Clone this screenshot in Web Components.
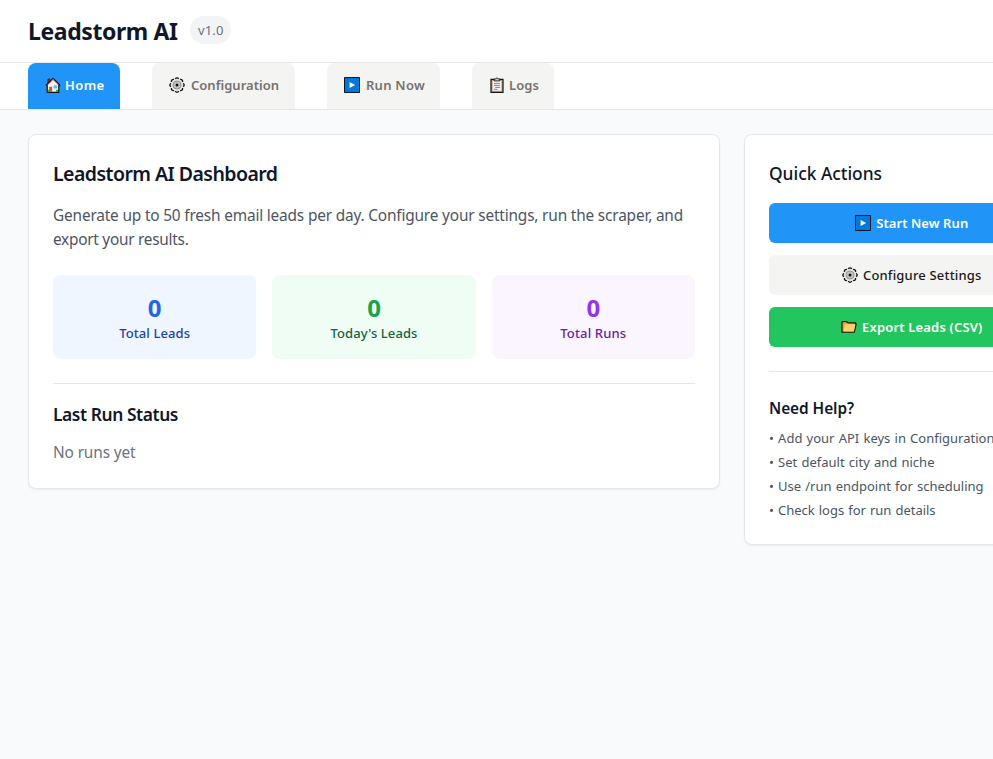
<!DOCTYPE html>
<html lang="en">
<head>
<meta charset="utf-8">
<title>Leadstorm AI</title>
<style>
html,body{margin:0;height:100%;overflow:hidden;background:#f9fafb}
body{font-family:"Noto Sans","Open Sans",sans-serif;color:#0f172a}
</style>
</head>
<body>
<lead-app></lead-app>
<script>
const define = (name, html, setup) => {
  const t = document.createElement('template');
  t.innerHTML = html;
  customElements.define(name, class extends HTMLElement {
    constructor() {
      super();
      this.attachShadow({mode: 'open'}).append(t.content.cloneNode(true));
    }
    connectedCallback() { if (setup) setup(this); }
  });
};

/* One line of text, tracked so that it fills the width given in "w". */
define('fit-text', `<style>
:host{display:inline-block;white-space:pre;flex:none}
</style><span><slot></slot></span>`, el => {
  const size = el.getAttribute('size') || 14;
  el.style.fontSize = size + 'px';
  el.style.fontWeight = el.getAttribute('weight') || 400;
  const w = +el.getAttribute('w');
  if (!w) return;
  const span = el.shadowRoot.querySelector('span');
  const natural = span.getBoundingClientRect().width;
  el.style.letterSpacing = ((w - natural) / el.textContent.length).toFixed(4) + 'px';
  el.style.width = w + 'px';
});

const gearTeeth = Array.from({length: 8}, (_, i) =>
  `<path d="M6.2 1.9Q8 -.3 9.8 1.9" transform="rotate(${i * 45} 8 8)"/>`).join('');
const icons = {
  home: `<path d="M2.2 7.8V15.2H13.8V7.8L8 2Z" fill="#f4f4f4"/><path d="M2.5 12.8h3v2h-3zM11 12.8h2.6v2H11z" fill="#16c60c"/><path d="M3 2h2v3L3 7z" fill="#d13438" stroke="#111" stroke-width=".7"/><path d="M.8 8.5 8 1.4l7.2 7.1" fill="none" stroke="#111" stroke-width="1.3"/><path d="M2.2 8v7.3h11.6V8" fill="none" stroke="#111" stroke-width="1.2"/><path d="M2.9 7.5 8 2.7l5.1 4.8" fill="none" stroke="#e8583c" stroke-width=".9"/><path d="M4.2 9.8h2.9v5H4.2z" fill="#e74835"/><path d="M8.6 8.2h3.4v3.2H8.6z" fill="#55c8f2"/>`,
  gear: `<circle cx="8" cy="8" r="6.5" fill="#e6e6e6"/><g fill="#eee" stroke="#161616" stroke-width="1.35">${gearTeeth}</g><circle cx="8" cy="8" r="5.8" fill="#e2e2e2"/><circle cx="8" cy="8" r="4" fill="#d2d2d2" stroke="#8a8a8a" stroke-width=".9"/><circle cx="8" cy="8" r="2.6" fill="none" stroke="#aaa" stroke-width=".6"/><circle cx="8" cy="8" r="1.5" fill="#111"/>`,
  play: `<path d="M.5.5h15v15H.5z" fill="#0078d7" stroke="#0b1724"/><path d="M5.6 4.9v6.2L11.1 8z" fill="#fff"/>`,
  clip: `<path d="M2 2.3h12v13H2z" fill="#c9a98d" stroke="#151515" stroke-width="1.2"/><path d="M3.7 4h8.6v9.8H3.7z" fill="#f5f5f5"/><path d="M5.2 3.9V1.9h1.6Q8-.4 9.2 1.9h1.6v2z" fill="#ccc" stroke="#222" stroke-width=".9"/><path d="M5 6.4h5.8M5 8.4h5.8M6.2 10.4H11M5 12.3h3.5" stroke="#777" stroke-width=".9"/>`,
  folder: `<path d="M1 13.2V2.7h4.8l1.1 1.1h7.4v1.1h.9l-1.9 8.3z" fill="#e9a92b" stroke="#1b1a12" stroke-width="1.2" stroke-linejoin="round"/><path d="M4.2 5.3h10.2l-1.6 7.3H2.4z" fill="#ffd071"/>`
};
define('app-icon', `<style>:host{display:block;flex:none;width:16px;height:16px}svg{display:block}</style><svg width="16" height="16" viewBox="0 0 16 16"></svg>`, el => {
  el.shadowRoot.querySelector('svg').innerHTML = icons[el.getAttribute('name')];
});

define('app-header', `<style>
:host{display:flex;box-sizing:border-box;height:63px;padding:0 28px;gap:12px;align-items:center;background:#fff;border-bottom:1px solid #e5e7eb}
.title{line-height:32px;padding-top:2px}
.pill{box-sizing:border-box;display:flex;width:41px;height:28px;padding:0 8px;border-radius:14px;background:#f3f4f6;color:#6b7280;line-height:28px;margin-top:-2px}
</style><div class="title"><fit-text size="23" weight="700" w="149.5">Leadstorm AI</fit-text></div><div class="pill" style="margin-left:.5px"><fit-text size="13" w="25.5">v1.0</fit-text></div>`);

define('nav-tab', `<style>
:host{display:flex;box-sizing:border-box;height:46px;padding:0 16px 2px;align-items:center;border-radius:8px 8px 0 0;background:#f4f4f3;color:#78716c;line-height:20px}
:host([active]){background:#2094f7;color:#fff}
</style><slot></slot>`);

define('app-nav', `<style>
:host{display:flex;box-sizing:border-box;height:47px;padding:0 28px;gap:32px;background:#fff;border-bottom:1px solid #e5e7eb}
nav-tab{flex:none}
app-icon{margin:0 6px 0 1px}
</style>
<nav-tab active style="width:92px"><app-icon name="home" style="margin-right:4px"></app-icon><fit-text size="13" weight="600" w="39.5">Home</fit-text></nav-tab>
<nav-tab style="width:143px"><app-icon name="gear"></app-icon><fit-text size="13" weight="600" w="88">Configuration</fit-text></nav-tab>
<nav-tab style="width:113px"><app-icon name="play"></app-icon><fit-text size="13" weight="600" w="59">Run Now</fit-text></nav-tab>
<nav-tab style="width:82px"><app-icon name="clip" style="margin-right:4px"></app-icon><fit-text size="13" weight="600" w="30">Logs</fit-text></nav-tab>`);

define('app-card', `<style>
:host{display:block;box-sizing:border-box;padding:24px;background:#fff;border:1px solid #e5e7eb;border-radius:8px;box-shadow:0 1px 2px rgba(0,0,0,.06)}
</style><slot></slot>`);

define('stat-tile', `<style>
:host{display:flex;flex-direction:column;align-items:center;padding:16px 0;border-radius:8px;background:var(--bg)}
.n{height:32px;line-height:34px;color:var(--num);font-size:24px;font-weight:700}
.l{height:20px;line-height:18px;color:var(--label)}
</style><div class="n"><slot name="value"></slot></div><div class="l"><slot></slot></div>`);

define('dash-panel', `<style>
h2,h3,p{margin:0;font:inherit}
h2{height:28px;line-height:29px;margin-bottom:17px}
.intro{height:48px;line-height:24px;color:#4b5563;margin-bottom:23px}
.intro fit-text{display:block}
.stats{display:grid;grid-template-columns:repeat(3,1fr);gap:16px}
.last{margin-top:24px;border-top:1px solid #e5e7eb;padding-top:16px}
h3{height:28px;line-height:28px;margin-bottom:12px}
.none{height:24px;line-height:24px;color:#6b7280}
</style>
<app-card>
<h2><fit-text size="19.5" weight="600" w="224.5">Leadstorm AI Dashboard</fit-text></h2>
<p class="intro"><fit-text size="15.4" w="630">Generate up to 50 fresh email leads per day. Configure your settings, run the scraper, and</fit-text><fit-text size="15.4" w="135.5">export your results.</fit-text></p>
<div class="stats">
<stat-tile style="--bg:#eff6ff;--num:#2563eb;--label:#1e40af"><span slot="value">0</span><fit-text size="13" weight="500" w="71">Total Leads</fit-text></stat-tile>
<stat-tile style="--bg:#f0fdf4;--num:#16a34a;--label:#166534"><span slot="value">0</span><fit-text size="13" weight="500" w="87">Today's Leads</fit-text></stat-tile>
<stat-tile style="--bg:#faf5ff;--num:#9333ea;--label:#6b21a8"><span slot="value">0</span><fit-text size="13" weight="500" w="66">Total Runs</fit-text></stat-tile>
</div>
<div class="last"><h3><fit-text size="17.4" weight="600" w="125">Last Run Status</fit-text></h3><p class="none"><fit-text size="15.4" w="82.5">No runs yet</fit-text></p></div>
</app-card>`);

define('action-button', `<style>
:host{display:flex;height:40px;align-items:center;justify-content:center;border-radius:6px;background:var(--bg);color:var(--fg,#fff);line-height:20px}
</style><slot></slot>`);

define('quick-panel', `<style>
h3,h4,ul{margin:0;padding:0;font:inherit;list-style:none}
h3{height:28px;line-height:28px;margin-bottom:16px}
.actions{display:grid;gap:12px}
app-icon{margin:0 5.5px 0 1px}
.help{margin-top:24px;border-top:1px solid #e5e7eb;padding-top:24px}
h4{height:24px;line-height:24px;margin-bottom:8px}
ul{display:grid;gap:4px;color:#4b5563}
li{display:flex;height:20px;line-height:20px;word-spacing:.8px}
</style>
<app-card>
<h3><fit-text size="17.4" weight="500" w="113">Quick Actions</fit-text></h3>
<div class="actions">
<action-button style="--bg:#2094f7"><app-icon name="play"></app-icon><fit-text size="13" weight="600" w="92">Start New Run</fit-text></action-button>
<action-button style="--bg:#f4f4f3;--fg:#1c1917"><app-icon name="gear"></app-icon><fit-text size="13" weight="500" w="118.5">Configure Settings</fit-text></action-button>
<action-button style="--bg:#22c55e"><app-icon name="folder"></app-icon><fit-text size="13" weight="600" w="120.5">Export Leads (CSV)</fit-text></action-button>
</div>
<div class="help"><h4><fit-text size="15.4" weight="600" w="85">Need Help?</fit-text></h4>
<ul>
<li><fit-text size="13" w="225.5">• Add your API keys in Configuration</fit-text></li>
<li><fit-text size="13" w="165.5">• Set default city and niche</fit-text></li>
<li><fit-text size="13" w="214.5">• Use /run endpoint for scheduling</fit-text></li>
<li><fit-text size="13" w="166.5">• Check logs for run details</fit-text></li>
</ul></div>
</app-card>`);

define('lead-app', `<style>
:host{display:block;height:100vh;overflow:hidden}
main{display:grid;width:1050px;grid-template-columns:692px 334px;gap:24px;align-items:start;padding:24px 28px}
</style><app-header></app-header><app-nav></app-nav><main><dash-panel></dash-panel><quick-panel></quick-panel></main>`);
</script>
</body>
</html>
